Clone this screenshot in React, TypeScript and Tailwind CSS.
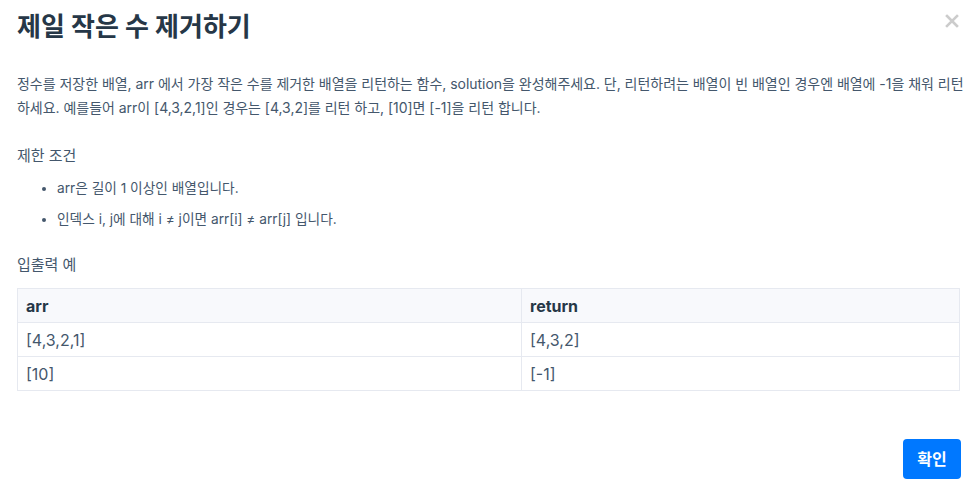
import React from "react";

const font = "font-['Inter','Noto_Sans_CJK_KR',sans-serif]";

const rows = [
  { arr: "[4,3,2,1]", ret: "[4,3,2]" },
  { arr: "[10]", ret: "[-1]" },
];

export default function App() {
  return (
    <div className={`w-[973px] h-[489px] bg-white flex flex-col ${font}`}>
      <div className="flex justify-between items-start pl-[17px] pr-[14px] pt-[9px]">
        <h1 className="text-[26px] leading-[36px] font-bold text-[#263747]">제일 작은 수 제거하기</h1>
        <button className="mt-[5px] text-[#cccccc]">
          <svg width="14" height="14" viewBox="0 0 14 14">
            <path d="M2 2 L12 12 M12 2 L2 12" stroke="currentColor" strokeWidth="2.6" strokeLinecap="square" />
          </svg>
        </button>
      </div>

      <div className="px-[17px] pr-[12px] text-[#44576c]">
        <p className="mt-[27px] mr-[-12px] text-[14px] leading-[24px] tracking-[-0.03px]">
          정수를 저장한 배열, arr 에서 가장 작은 수를 제거한 배열을 리턴하는 함수, solution을 완성해주세요. 단, 리턴하려는 배열이 빈 배열인 경우엔 배열에 -1을 채워 리턴
          <br />
          하세요. 예를들어 arr이 [4,3,2,1]인 경우는 [4,3,2]를 리턴 하고, [10]면 [-1]을 리턴 합니다.
        </p>

        <h5 className="mt-[24px] text-[15px] leading-[24px]">제한 조건</h5>
        <ul className="mt-[8px] pl-[40px] list-disc text-[13.7px] leading-[24px] space-y-[7px]">
          <li>arr은 길이 1 이상인 배열입니다.</li>
          <li>인덱스 i, j에 대해 i ≠ j이면 arr[i] ≠ arr[j] 입니다.</li>
        </ul>

        <h5 className="mt-[22px] text-[15px] leading-[24px]">입출력 예</h5>
        <table className="mt-[11px] w-[943px] border-collapse text-[16px]">
          <thead>
            <tr className="bg-[#f8f9fc]">
              <th className="w-[504px] h-[34px] px-[8px] text-left font-bold text-[#263747] border border-[#e6e9f0]">arr</th>
              <th className="h-[34px] px-[8px] text-left font-bold text-[#263747] border border-[#e6e9f0]">return</th>
            </tr>
          </thead>
          <tbody>
            {rows.map((r) => (
              <tr key={r.arr}>
                <td className="h-[34px] px-[8px] border border-[#e6e9f0]">{r.arr}</td>
                <td className="h-[34px] px-[8px] border border-[#e6e9f0]">{r.ret}</td>
              </tr>
            ))}
          </tbody>
        </table>
      </div>

      <div className="mt-auto flex justify-end pr-[12px] pb-[10px]">
        <button className="w-[58px] h-[40px] rounded-[4px] bg-[#0078ff] text-white text-[16px] font-bold">확인</button>
      </div>
    </div>
  );
}
